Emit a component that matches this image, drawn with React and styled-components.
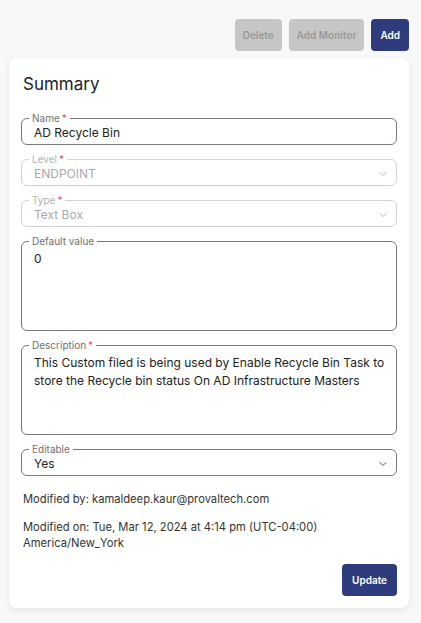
import React from "react";
import styled, { createGlobalStyle } from "styled-components";
import { ChevronDown } from "lucide-react";

const GlobalStyle = createGlobalStyle`
  html, body {
    margin: 0;
    padding: 0;
    background: #f8f8f8;
    font-family: Inter, "Noto Sans", sans-serif;
  }
`;

const Page = styled.div`
  width: 421px;
  min-height: 623px;
  box-sizing: border-box;
  padding: 19px 12px 16px 9px;
`;

const Toolbar = styled.div`
  display: flex;
  justify-content: flex-end;
  gap: 7px;
  margin-bottom: 7px;
`;

const ToolButton = styled.button`
  height: 32px;
  padding: 0 ${({ $pad }) => $pad || 8}px;
  border: none;
  border-radius: 4px;
  font-family: Inter, sans-serif;
  font-size: 10px;
  font-weight: 600;
  background: ${({ $primary }) => ($primary ? "#2e3c7e" : "#c6c6c6")};
  color: ${({ $primary }) => ($primary ? "#ffffff" : "#9a9a9a")};
  cursor: pointer;
`;

const Card = styled.div`
  background: #fff;
  border-radius: 8px;
  box-shadow: 0 2px 6px rgba(0, 0, 0, 0.08);
  padding: 14px 12px 12px 12px;
`;

const Title = styled.h2`
  margin: 0 0 16px 2px;
  font-size: 17px;
  line-height: 24px;
  font-weight: 400;
  color: #1e1e2a;
`;

const Fields = styled.div`
  display: flex;
  flex-direction: column;
  gap: 8px;
`;

const Field = styled.fieldset`
  margin: 0;
  padding: 0 8px 0 7px;
  border: 1px solid ${({ $disabled }) => ($disabled ? "#d2d2d2" : "#77777c")};
  border-radius: 6px;
  min-width: 0;
`;

const Legend = styled.legend`
  padding: 0 3px;
  font-size: 10px;
  line-height: 12px;
  color: ${({ $disabled }) => ($disabled ? "#b4b4b4" : "#707070")};
`;

const Star = styled.span`
  color: #e25462;
  margin-left: 2px;
`;

const Value = styled.div`
  display: flex;
  align-items: flex-start;
  justify-content: space-between;
  font-size: 12px;
  line-height: 17px;
  color: ${({ $disabled }) => ($disabled ? "#a9a9a9" : "#222")};
  padding: 0 0 3px 5px;
`;

const Area = styled.div`
  height: ${({ $h }) => $h}px;
  box-sizing: border-box;
  padding: 3px 0 0 5px;
  font-size: 12px;
  line-height: 18px;
  color: #222;
`;

const Chevron = styled(ChevronDown)`
  margin-top: 3px;
  margin-right: -1px;
  flex-shrink: 0;
  color: ${({ $disabled }) => ($disabled ? "#b8b8b8" : "#555")};
`;

const Meta = styled.p`
  margin: 0;
  font-size: 11.2px;
  line-height: 16px;
  color: #333;
`;

const MetaBlock = styled.div`
  margin: 15px 0 0 2px;
  display: flex;
  flex-direction: column;
  gap: 12px;
`;

const Footer = styled.div`
  display: flex;
  justify-content: flex-end;
  margin-top: 13px;
`;

const OutlinedField = ({ label, required, disabled, select, children }) => (
  <Field $disabled={disabled}>
    <Legend $disabled={disabled}>
      {label}
      {required && <Star>*</Star>}
    </Legend>
    <Value $disabled={disabled}>
      <span>{children}</span>
      {select && <Chevron size={12} $disabled={disabled} />}
    </Value>
  </Field>
);

const AreaField = ({ label, required, height, children }) => (
  <Field>
    <Legend>
      {label}
      {required && <Star>*</Star>}
    </Legend>
    <Area $h={height}>{children}</Area>
  </Field>
);

export default function App() {
  return (
    <>
      <GlobalStyle />
      <Page>
        <Toolbar>
          <ToolButton>Delete</ToolButton>
          <ToolButton>Add Monitor</ToolButton>
          <ToolButton $primary $pad={9}>
            Add
          </ToolButton>
        </Toolbar>
        <Card>
          <Title>Summary</Title>
          <Fields>
            <OutlinedField label="Name" required>
              AD Recycle Bin
            </OutlinedField>
            <OutlinedField label="Level" required disabled select>
              ENDPOINT
            </OutlinedField>
            <OutlinedField label="Type" required disabled select>
              Text Box
            </OutlinedField>
            <AreaField label="Default value" height={83}>
              0
            </AreaField>
            <AreaField label="Description" required height={83}>
              This Custom filed is being used by Enable Recycle Bin Task to store the Recycle bin status On AD Infrastructure Masters
            </AreaField>
            <OutlinedField label="Editable" select>
              Yes
            </OutlinedField>
          </Fields>
          <MetaBlock>
            <Meta>Modified by: kamaldeep.kaur@provaltech.com</Meta>
            <Meta>
              Modified on: Tue, Mar 12, 2024 at 4:14 pm (UTC-04:00)
              <br />
              America/New_York
            </Meta>
          </MetaBlock>
          <Footer>
            <ToolButton $primary $pad={10}>
              Update
            </ToolButton>
          </Footer>
        </Card>
      </Page>
    </>
  );
}
